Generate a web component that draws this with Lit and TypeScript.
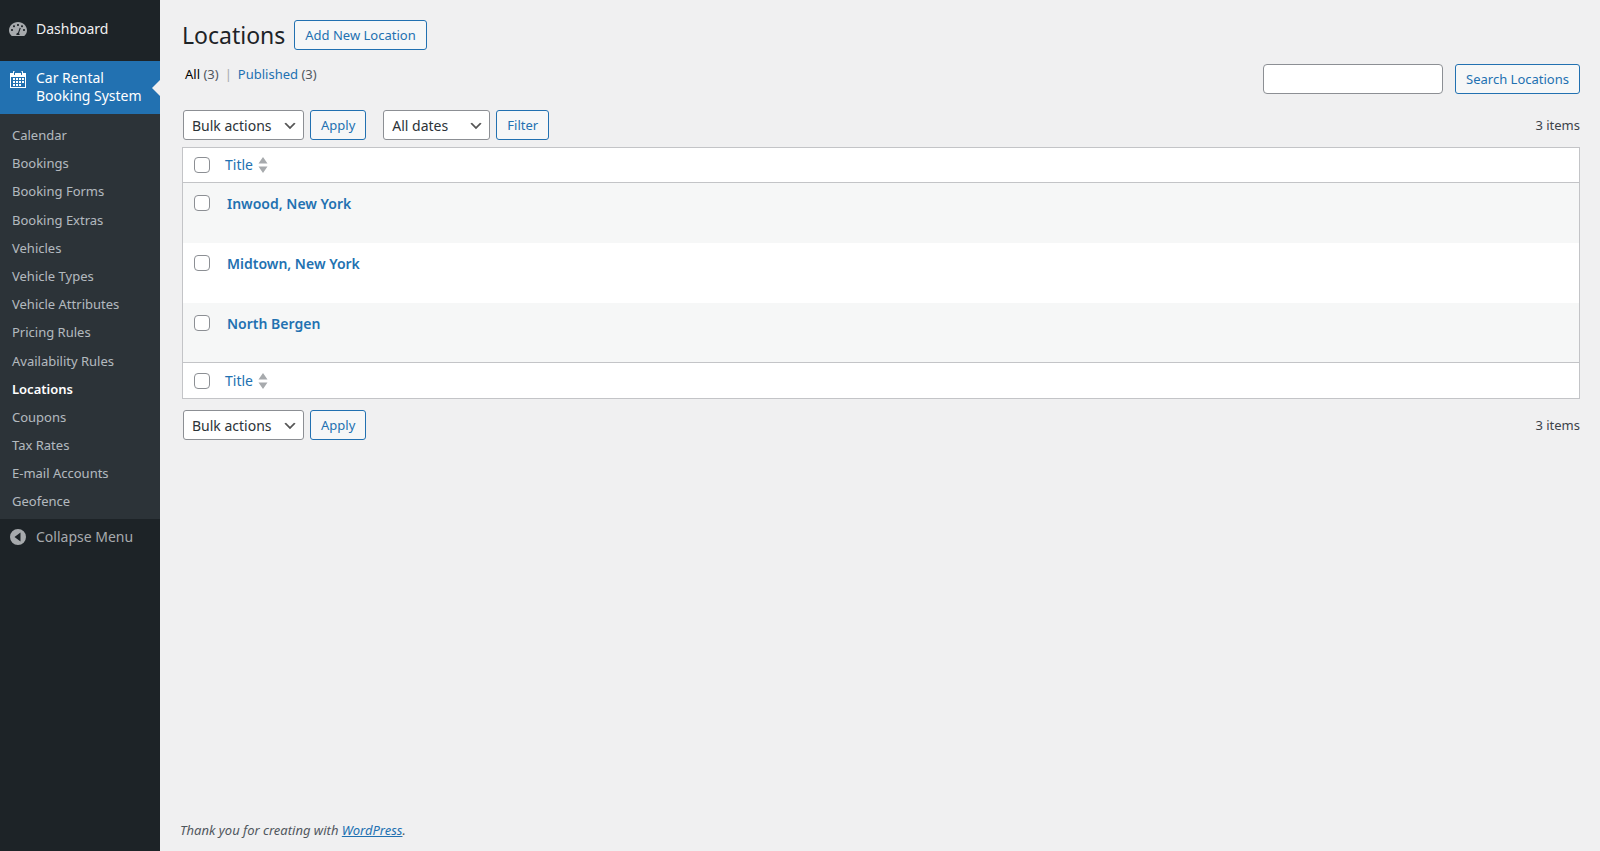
import {LitElement, css, html, svg} from 'lit'
import {customElement} from 'lit/decorators.js'

const menu = [
    "Calendar", "Bookings", "Booking Forms", "Booking Extras", "Vehicles", "Vehicle Types",
    "Vehicle Attributes", "Pricing Rules", "Availability Rules", "Locations", "Coupons",
    "Tax Rates", "E-mail Accounts", "Geofence",
]
const locations = ["Inwood, New York", "Midtown, New York", "North Bergen"]

const dashboardIcon = svg`<svg class="icon" viewBox="0 0 20 20"><path fill="currentColor" fill-rule="evenodd" d="M3.76 16h12.48C17.97 14.6 19 12.5 19 10.6 19 5.8 15 2 10 2S1 5.8 1 10.6c0 1.9 1.03 4 2.76 5.4zM10 4c.6 0 1 .45 1 1s-.4 1-1 1-1-.45-1-1 .4-1 1-1zM6 5.2c.55 0 1 .45 1 1s-.45 1-1 1-1-.45-1-1 .45-1 1-1zm8 0c.55 0 1 .45 1 1s-.45 1-1 1-1-.45-1-1 .45-1 1-1zM4 9c.55 0 1 .45 1 1s-.45 1-1 1-1-.45-1-1 .45-1 1-1zm12 0c.55 0 1 .45 1 1s-.45 1-1 1-1-.45-1-1 .45-1 1-1zm-3.2-.9L11 13.3c.5.4.7 1 .6 1.7H8.4c-.2-1 .4-2 1.4-2.2l.2-.02 1.7-5.1z"/></svg>`
const calendarIcon = svg`<svg class="icon" viewBox="0 0 20 20"><path fill="currentColor" fill-rule="evenodd" d="M15 4h3v15H2V4h3V3c0-.55.45-1 1-1s1 .45 1 1v1h6V3c0-.55.45-1 1-1s1 .45 1 1v1zM6 3v2.5a.5.5 0 0 0 1 0V3a.5.5 0 0 0-1 0zm7 0v2.5a.5.5 0 0 0 1 0V3a.5.5 0 0 0-1 0zM3 18h14V8H3v10zm2-9h2v2H5V9zm3 0h2v2H8V9zm3 0h2v2h-2V9zm3 0h2v2h-2V9zM5 12h2v2H5v-2zm3 0h2v2H8v-2zm3 0h2v2h-2v-2zm3 0h2v2h-2v-2zM5 15h2v2H5v-2zm3 0h2v2H8v-2zm3 0h2v2h-2v-2z"/></svg>`
const collapseIcon = svg`<svg class="icon" viewBox="0 0 20 20"><path fill="currentColor" fill-rule="evenodd" d="M10 2a8 8 0 1 1 0 16 8 8 0 0 1 0-16zm2.5 3.5L6.5 10l6 4.5v-9z"/></svg>`
const sortIcon = svg`<svg class="sort" viewBox="0 0 10 16"><path fill="#a7aaad" d="M5 0l4.5 6.5h-9zM5 16L.5 9.5h9z"/></svg>`

@customElement('app-root')
export class App_Root extends LitElement
{
    headRow()
    {
        return html`
            <div class="row head">
                <input type="checkbox" class="check">
                <a class="sortable">Title ${sortIcon}</a>
            </div>
        `
    }

    render()
    {
        return html`
            <aside class="sidebar">
                <a class="top">${dashboardIcon}<span>Dashboard</span></a>
                <a class="top current">${calendarIcon}<span>Car Rental<br>Booking System</span></a>
                <nav class="submenu">
                    ${menu.map(item => html`<a class="${item === "Locations" ? "active" : ""}">${item}</a>`)}
                </nav>
                <a class="collapse">${collapseIcon}<span>Collapse Menu</span></a>
            </aside>

            <main class="content">
                <header class="heading">
                    <h1>Locations</h1>
                    <button class="btn add">Add New Location</button>
                </header>

                <div class="views">
                    <ul>
                        <li><b>All</b> <i>(3)</i></li>
                        <li class="sep">|</li>
                        <li><a>Published</a> <i>(3)</i></li>
                    </ul>
                    <div class="search">
                        <input type="search" class="field">
                        <button class="btn">Search Locations</button>
                    </div>
                </div>

                <div class="tablenav">
                    <select class="bulk"><option>Bulk actions</option></select>
                    <button class="btn apply">Apply</button>
                    <select class="dates"><option>All dates</option></select>
                    <button class="btn filter">Filter</button>
                    <span class="count">3 items</span>
                </div>

                <section class="table">
                    ${this.headRow()}
                    ${locations.map(name => html`
                        <div class="row item">
                            <input type="checkbox" class="check">
                            <a class="name">${name}</a>
                        </div>
                    `)}
                    <div class="foot">${this.headRow()}</div>
                </section>

                <div class="tablenav lower">
                    <select class="bulk"><option>Bulk actions</option></select>
                    <button class="btn apply">Apply</button>
                    <span class="count">3 items</span>
                </div>

                <footer class="thanks">Thank you for creating with <a>WordPress</a>.</footer>
            </main>
        `
    }

    static styles = css`
        :host
        {
            display: flex;
            min-height: 851px;
            background: #f0f0f1;
            color: #3c434a;
            font-family: "Noto Sans", sans-serif;
            font-size: 13px;
            line-height: 18px;
        }

        *
        {
            box-sizing: border-box;
            font-family: inherit;
        }

        a
        {
            color: #2271b1;
        }

        .sidebar
        {
            width: 160px;
            flex: none;
            background: #1d2327;
            padding-top: 12px;
            color: #f0f0f1;
            font-size: 14px;
        }

        .icon
        {
            width: 20px;
            height: 20px;
            flex: none;
            color: #a7aaad;
        }

        .top
        {
            display: flex;
            gap: 8px;
            height: 36px;
            padding: 8px 8px;
            color: #f0f0f1;
        }

        .top.current
        {
            position: relative;
            height: 53px;
            margin-top: 13px;
            padding: 8px;
            background: #2271b1;
            color: #fff;
        }

        .top.current .icon
        {
            color: #fff;
        }

        .top.current::after
        {
            content: "";
            position: absolute;
            right: 0;
            top: 50%;
            margin-top: -8px;
            border: 8px solid transparent;
            border-left-width: 0;
            border-right-color: #f0f0f1;
        }

        .submenu
        {
            background: #2c3338;
            padding: 7px 0 3px;
            font-size: 13px;
        }

        .submenu a
        {
            display: block;
            height: 28.2px;
            padding: 5px 12px;
            color: rgba(240, 246, 252, 0.7);
        }

        .submenu a.active
        {
            color: #fff;
            font-weight: 600;
        }

        .collapse
        {
            display: flex;
            gap: 8px;
            align-items: center;
            height: 36px;
            padding: 0 8px;
            color: #a7aaad;
        }

        .content
        {
            position: relative;
            flex: 1;
            min-width: 0;
            padding: 0 20px 0 22px;
        }

        .heading
        {
            display: flex;
            align-items: center;
            gap: 9px;
            padding-top: 20px;
            height: 50px;
        }

        h1
        {
            margin: 0;
            font-size: 23px;
            font-weight: 400;
            color: #1d2327;
        }

        .btn
        {
            height: 30px;
            padding: 0 10px;
            border: 1px solid #2271b1;
            border-radius: 3px;
            background: #f6f7f7;
            color: #2271b1;
            font-size: 13px;
        }

        .views
        {
            display: flex;
            justify-content: space-between;
            height: 60px;
            padding-top: 14px;
        }

        ul
        {
            display: flex;
            gap: 6px;
            margin: 0;
            padding: 1px 0 0 3px;
            list-style: none;
        }

        ul b
        {
            font-weight: 400;
            color: #000;
        }

        ul i
        {
            font-style: normal;
            color: #50575e;
        }

        .sep
        {
            color: #a7aaad;
        }

        .search
        {
            display: flex;
            gap: 12px;
        }

        .field
        {
            width: 180px;
            height: 30px;
            border: 1px solid #8c8f94;
            border-radius: 4px;
            background: #fff;
        }

        .tablenav
        {
            display: flex;
            align-items: center;
            height: 30px;
            padding-left: 1px;
        }

        select
        {
            appearance: none;
            height: 30px;
            padding: 0 24px 0 8px;
            border: 1px solid #8c8f94;
            border-radius: 3px;
            color: #2c3338;
            font-size: 14px;
            background: #fff url('data:image/svg+xml;charset=US-ASCII,%3Csvg%20width%3D%2220%22%20height%3D%2220%22%20xmlns%3D%22http%3A%2F%2Fwww.w3.org%2F2000%2Fsvg%22%3E%3Cpath%20d%3D%22M5%206l5%205%205-5%202%201-7%207-7-7%202-1z%22%20fill%3D%22%23555%22%2F%3E%3C%2Fsvg%3E') no-repeat right 5px top 55%;
            background-size: 16px 16px;
        }

        .bulk
        {
            width: 121px;
        }

        .dates
        {
            width: 107px;
            margin-left: 17px;
        }

        .apply,
        .filter
        {
            margin-left: 6px;
        }

        .count
        {
            margin-left: auto;
        }

        .table
        {
            margin-top: 7px;
            border: 1px solid #c3c4c7;
            background: #fff;
        }

        .row
        {
            display: flex;
            gap: 14px;
        }

        .head
        {
            height: 35px;
            padding-left: 11px;
            align-items: center;
            gap: 15px;
        }

        .head .sortable
        {
            display: flex;
            align-items: center;
            gap: 5px;
            font-size: 14px;
        }

        .sort
        {
            width: 10px;
            height: 16px;
        }

        .head
        {
            border-bottom: 1px solid #c3c4c7;
        }

        .foot
        {
            border-top: 1px solid #c3c4c7;
            margin-top: -1px;
        }

        .foot .head
        {
            border-bottom: 0;
        }

        .item
        {
            height: 60px;
            padding: 12px 0 0 11px;
            gap: 17px;
        }

        .item:nth-of-type(even)
        {
            background: #f6f7f7;
        }

        .check
        {
            appearance: none;
            width: 16px;
            height: 16px;
            margin: 0;
            flex: none;
            border: 1px solid #8c8f94;
            border-radius: 4px;
            background: #fff;
        }

        .name
        {
            font-size: 14px;
            font-weight: 600;
        }

        .lower
        {
            margin-top: 11px;
        }

        .thanks
        {
            position: absolute;
            left: 20px;
            bottom: 12px;
            font-style: italic;
            color: #50575e;
        }

        .thanks a
        {
            text-decoration: underline;
        }
    `
}

declare global
{
    interface HTMLElementTagNameMap
    {
        'app-root': App_Root
    }
}
